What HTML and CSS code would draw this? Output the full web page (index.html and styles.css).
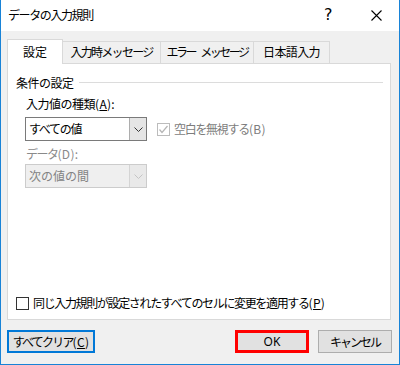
FILE: index.html
```html
<!DOCTYPE html>
<html lang="ja">
<head>
<meta charset="utf-8">
<title>データの入力規則</title>
<link rel="stylesheet" href="styles.css">
</head>
<body>
<div class="window">
  <div class="titlebar">
    <span class="title">データの入力規則</span>
    <span class="help">?</span>
    <span class="close"><svg width="11" height="11" viewBox="0 0 11 11"><path d="M0.5 0.5 L10.5 10.5 M10.5 0.5 L0.5 10.5" stroke="#000" stroke-width="1.1" fill="none"/></svg></span>
  </div>
  <div class="body">
    <div class="tabs">
      <div class="tab tab-sel t1">設定</div>
      <div class="tab t2">入力時メッセージ</div>
      <div class="tab t3">エラー<span class="sp"></span>メッセージ</div>
      <div class="tab t4">日本語入力</div>
    </div>
    <div class="panel">
      <div class="group-head"><span>条件の設定</span><span class="group-line"></span></div>
      <div class="label label-type">入力値の種類<span class="lat">(<u>A</u>):</span></div>
      <div class="row">
        <div class="combo">
          <span class="combo-text text-all">すべての値</span>
          <span class="combo-btn"><svg width="9" height="5" viewBox="0 0 9 5"><path d="M0.5 0.5 L4.5 4.5 L8.5 0.5" stroke="#333" stroke-width="1" fill="none"/></svg></span>
        </div>
        <div class="check-dis">
          <span class="cbox cbox-dis"><svg width="11" height="11" viewBox="0 0 11 11"><path d="M1.5 5.5 L4 8.5 L9.5 2" stroke="#b5b5b5" stroke-width="1.2" fill="none"/></svg></span>
          <span class="dis-text">空白を無視する<span class="lat">(B)</span></span>
        </div>
      </div>
      <div class="label label-dis">データ<span class="lat">(D):</span></div>
      <div class="combo combo-dis">
        <span class="combo-text">次の値の間</span>
        <span class="combo-btn"><svg width="9" height="5" viewBox="0 0 9 5"><path d="M0.5 0.5 L4.5 4.5 L8.5 0.5" stroke="#c4c4c4" stroke-width="1" fill="none"/></svg></span>
      </div>
      <div class="apply">
        <span class="cbox"></span>
        <span class="apply-text">同じ入力規則が設定されたすべてのセルに変更を適用する<span class="lat">(<u>P</u>)</span></span>
      </div>
    </div>
    <div class="buttons">
      <div class="btn btn-focus">すべてクリア<span class="lat">(<u>C</u>)</span></div>
      <div class="spacer"></div>
      <div class="btn btn-ok">OK</div>
      <div class="btn btn-cancel">キャンセル</div>
    </div>
  </div>
</div>
</body>
</html>
```

FILE: styles.css
```css
html, body {
  margin: 0;
  padding: 0;
  background: #ffffff;
}
body {
  font-family: "Noto Sans CJK JP", "Noto Sans", sans-serif;
  font-size: 12px;
  color: #000;
  white-space: nowrap;
}
.window {
  width: 400px;
  height: 365px;
  box-sizing: border-box;
  border-left: 1px solid #1883d7;
  border-right: 1px solid #1883d7;
  border-bottom: 1px solid #1883d7;
  display: flex;
  flex-direction: column;
  overflow: hidden;
}
.titlebar {
  height: 31px;
  flex: none;
  background: #fff;
  display: flex;
  align-items: center;
  padding-left: 7px;
  line-height: 14px;
}
.title {
  flex: 1;
  font-size: 12px;
  letter-spacing: -1.4px;
  margin-top: -1px;
}
.help {
  width: 14px;
  font-family: "DejaVu Sans", sans-serif;
  font-size: 16px;
  line-height: 18px;
  margin-right: 33px;
  margin-top: -1px;
  color: #000;
}
.close {
  display: flex;
  margin-right: 17px;
}
.body {
  flex: 1;
  background: #f0f0f0;
  padding: 8px 8px 0 6px;
  display: flex;
  flex-direction: column;
}
.tabs {
  display: flex;
  align-items: flex-end;
  height: 24px;
  position: relative;
  z-index: 1;
}
.tab {
  box-sizing: border-box;
  height: 22px;
  border: 1px solid #d9d9d9;
  border-bottom: none;
  background: #f0f0f0;
  text-align: center;
  line-height: 20px;
  margin-left: -1px;
  overflow: hidden;
}
.tab-sel {
  height: 25px;
  margin-bottom: -1px;
  background: #fff;
  line-height: 24px;
  margin-left: 0;
  position: relative;
  z-index: 2;
}
.t1 { width: 56px; }
.t2 { width: 99px; letter-spacing: -1.7px; }
.t3 { width: 94px; letter-spacing: -2.5px; }
.t4 { width: 77px; letter-spacing: -0.6px; }
.sp {
  display: inline-block;
  width: 5px;
}
.lat {
  letter-spacing: 0.3px;
}
.panel {
  box-sizing: border-box;
  height: 257px;
  background: #fff;
  border: 1px solid #d9d9d9;
  display: flex;
  flex-direction: column;
  padding: 12px 7px 9px 8px;
}
.group-head {
  display: flex;
  align-items: center;
  height: 14px;
  line-height: 14px;
  letter-spacing: -0.5px;
}
.group-line {
  flex: 1;
  height: 1px;
  background: #dcdcdc;
  margin-left: 5px;
  margin-top: -1px;
}
.label {
  margin-left: 10px;
  margin-top: 7px;
  height: 14px;
  line-height: 14px;
}
.label-type {
  letter-spacing: -0.5px;
}
.label-dis {
  color: #8a8a8a;
  margin-top: 6px;
  letter-spacing: -1.5px;
}
.row {
  display: flex;
  align-items: center;
  margin-top: 6px;
}
.combo {
  box-sizing: border-box;
  width: 122px;
  height: 24px;
  border: 1px solid #7a7a7a;
  background: #fff;
  display: flex;
  margin-left: 9px;
}
.combo-text {
  flex: 1;
  line-height: 22px;
  padding-left: 3px;
}
.text-all {
  letter-spacing: -1.3px;
}
.combo-btn {
  width: 16px;
  background: #e5e5e5;
  border-left: 1px solid #adadad;
  display: flex;
  align-items: center;
  justify-content: center;
}
.combo-dis {
  margin-top: 3px;
  border-color: #cccccc;
  background: #efefef;
  color: #838383;
}
.combo-dis .combo-btn {
  background: #e9e9e9;
  border-left-color: #d4d4d4;
}
.check-dis {
  display: flex;
  align-items: center;
  margin-left: 10px;
}
.cbox {
  box-sizing: border-box;
  width: 13px;
  height: 13px;
  border: 1px solid #333;
  background: #fff;
  display: flex;
  align-items: center;
  justify-content: center;
  flex: none;
}
.cbox-dis {
  border-color: #bcbcbc;
}
.dis-text {
  color: #7d7d7d;
  margin-left: 4px;
  line-height: 14px;
  letter-spacing: -1.3px;
}
.apply {
  margin-top: auto;
  display: flex;
  align-items: center;
  height: 14px;
}
.apply-text {
  margin-left: 4px;
  line-height: 14px;
  letter-spacing: -1.35px;
}
.buttons {
  display: flex;
  margin-top: 10px;
  margin-right: -1px;
  height: 23px;
}
.spacer { flex: 1; }
.btn {
  box-sizing: border-box;
  height: 23px;
  background: #e1e1e1;
  border: 1px solid #adadad;
  display: flex;
  align-items: center;
  justify-content: center;
  width: 74px;
  line-height: 14px;
}
.btn-focus {
  width: 88px;
  border: 2px solid #0078d7;
  letter-spacing: -1.8px;
}
.btn-ok {
  border: 3px solid #ff0000;
  margin-right: 9px;
  font-family: "Noto Sans", sans-serif;
  font-size: 12px;
}
.btn-cancel {
  letter-spacing: -2px;
}
u {
  text-decoration: underline;
  text-underline-offset: 1px;
}
```
